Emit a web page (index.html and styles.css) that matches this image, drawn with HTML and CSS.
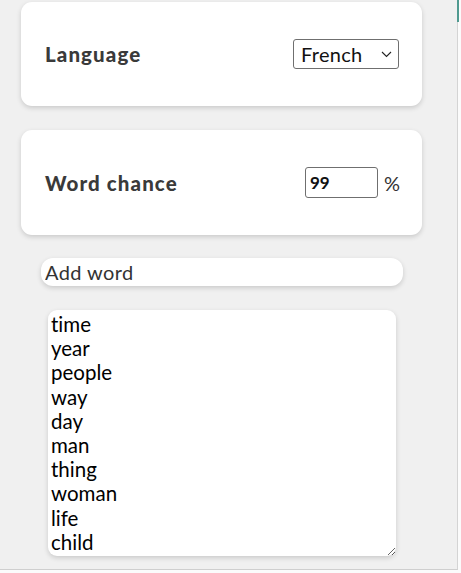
FILE: index.html
```html
<!DOCTYPE html>
<html>
<head>
<meta charset="utf-8">
<link rel="stylesheet" href="styles.css">
</head>
<body>
<div class="panel">
  <div class="scroll-thumb"></div>
  <div class="card">
    <span class="label">Language</span>
    <div class="select-wrap">
      <select class="select"><option>French</option></select>
      <svg class="chev" width="11" height="7" viewBox="0 0 11 7"><path d="M1 1 L5.5 5.5 L10 1" fill="none" stroke="#222" stroke-width="1.1"/></svg>
    </div>
  </div>
  <div class="card">
    <span class="label">Word chance</span>
    <div class="chance">
      <input class="num" type="text" value="99">
      <span class="pct">%</span>
    </div>
  </div>
  <input class="add" type="text" placeholder="Add word">
  <textarea class="words">time
year
people
way
day
man
thing
woman
life
child</textarea>
</div>
</body>
</html>
```
FILE: styles.css
```css
html, body {
  margin: 0;
  padding: 0;
  background: #fbfbfb;
}
body {
  font-family: "Lato", "Noto Sans", sans-serif;
  font-variant-ligatures: none;
  width: 461px;
  height: 573px;
  overflow: hidden;
}
.panel {
  position: relative;
  box-sizing: border-box;
  width: 458px;
  height: 570px;
  background: #f0f0f0;
  border-right: 1px solid #d4d4d4;
  border-bottom: 1px solid #cfcfcf;
  padding: 2px 0 0 21px;
  display: flex;
  flex-direction: column;
  align-items: flex-start;
}
.scroll-thumb {
  position: absolute;
  right: -2px;
  top: 0;
  width: 2px;
  height: 22px;
  background: #4f9a90;
}
.card {
  box-sizing: border-box;
  width: 401px;
  height: 104px;
  background: #fff;
  border-radius: 11px;
  box-shadow: 0 2px 5px rgba(0,0,0,0.16);
  display: flex;
  align-items: center;
  justify-content: space-between;
  padding: 0 23px 0 24px;
  margin-bottom: 24px;
}
.card + .card { height: 105px; margin-bottom: 23px; }
.label {
  font-weight: 900;
  font-size: 20.5px;
  color: #3a3a3a;
  letter-spacing: 1.1px;
}
.select-wrap {
  position: relative;
  display: flex;
}
.select {
  appearance: none;
  -webkit-appearance: none;
  font-family: inherit;
  font-size: 20px;
  letter-spacing: 0.3px;
  color: #111;
  width: 106px;
  height: 30px;
  border: 1px solid #6f6f6f;
  border-radius: 3px;
  background: #fff;
  padding: 0 7px;
}
.chev {
  position: absolute;
  right: 7px;
  top: 12px;
  pointer-events: none;
}
.chance {
  display: flex;
  align-items: center;
  gap: 6px;
}
.num {
  box-sizing: border-box;
  width: 73px;
  height: 31px;
  border: 1px solid #6f6f6f;
  border-radius: 3px;
  font-family: inherit;
  font-size: 17px;
  font-weight: 700;
  padding: 0 4px;
  color: #111;
}
.pct {
  width: 15px;
  font-size: 20px;
  color: #333;
}
.add {
  box-sizing: border-box;
  margin-left: 20px;
  width: 362px;
  height: 28px;
  border: none;
  border-radius: 12px;
  background: #fff;
  box-shadow: 0 2px 5px rgba(0,0,0,0.16);
  font-family: inherit;
  font-size: 20px;
  letter-spacing: 0.4px;
  padding: 0 4px;
  outline: none;
}
.add::placeholder { color: #333; opacity: 1; }
.words {
  box-sizing: border-box;
  margin-top: 24px;
  margin-left: 27px;
  width: 348px;
  height: 246px;
  border: none;
  border-radius: 9px;
  background: #fff;
  box-shadow: 0 2px 5px rgba(0,0,0,0.16);
  font-family: inherit;
  font-variant-ligatures: none;
  font-size: 20.5px;
  line-height: 24.2px;
  padding: 2px 3px;
  color: #000;
  overflow: hidden;
  outline: none;
}
```
